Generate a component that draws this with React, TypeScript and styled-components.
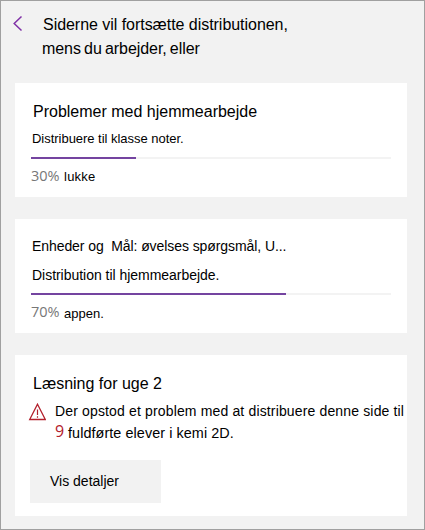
import styled, { createGlobalStyle } from "styled-components";

const GlobalStyle = createGlobalStyle`
  * {
    box-sizing: border-box;
  }
  body {
    margin: 0;
    background: #f2f2f2;
    font-family: "Liberation Sans", Arial, sans-serif;
    color: #000;
  }
`;

const Panel = styled.main`
  width: 425px;
  height: 530px;
  padding: 12px 17px 0 14px;
  border: 1px solid #a0a0a0;
  background: #f2f2f2;
  overflow: hidden;
`;

const Header = styled.header`
  display: flex;
  height: 70px;
`;

const BackButton = styled.button`
  width: 27px;
  height: 24px;
  padding: 0;
  border: 0;
  background: none;

  svg {
    display: block;
    overflow: visible;
  }
`;

const Heading = styled.h1`
  margin: 0;
  font-size: 16px;
  font-weight: 400;
`;

const Line = styled.span<{
  $size?: number;
  $height?: number;
  $spacing?: number;
  $wordSpacing?: number;
  $indent?: number;
}>`
  display: block;
  padding-left: ${({ $indent = 0 }) => $indent}px;
  font-size: ${({ $size = 14 }) => $size}px;
  line-height: ${({ $height = 24 }) => $height}px;
  letter-spacing: ${({ $spacing = 0 }) => $spacing}px;
  word-spacing: ${({ $wordSpacing = 0 }) => $wordSpacing}px;
  white-space: pre;
`;

const CardList = styled.div`
  display: flex;
  flex-direction: column;
  gap: 22px;
`;

const Card = styled.section<{ $height: number }>`
  height: ${({ $height }) => $height}px;
  padding: 17px 16px 0;
  background: #fff;
`;

const Track = styled.div<{ $top: number }>`
  height: 2px;
  margin-top: ${({ $top }) => $top}px;
  background: #f3f3f3;
`;

const Fill = styled.div`
  height: 2px;
  background: #7444a0;
`;

const Status = styled.div`
  display: flex;
  gap: 4px;
  margin-top: 6px;
`;

const Percent = styled.span`
  width: 29px;
  color: #777;
  font-family: "Open Sans", sans-serif;
  font-size: 14.5px;
  line-height: 22px;
  letter-spacing: -0.1px;
`;

const Alert = styled.div`
  display: flex;
  margin: 4px -16px 0 -3px;

  svg {
    flex: none;
    margin-top: 3px;
  }
`;

const AlertText = styled.div`
  padding-left: 9px;
`;

const AlertRow = styled.div`
  display: flex;
`;

const Count = styled.span`
  width: 12px;
  color: #b3202c;
  font-family: "Open Sans", sans-serif;
  font-size: 16px;
  line-height: 19px;
`;

const DetailsButton = styled.button`
  display: flex;
  width: 131px;
  height: 43px;
  margin: 16px 0 0 -1px;
  padding: 9px 0 0 20px;
  border: 0;
  background: #f2f2f2;
  color: #000;
  font-family: inherit;
  text-align: left;
`;

const BackIcon = () => (
  <svg width="12" height="24" viewBox="0 0 12 24" fill="none">
    <path d="M6.5 3.5 L-0.8 10.5 L6.5 17.5" stroke="#8031a7" strokeWidth="1.5" />
  </svg>
);

const WarningIcon = () => (
  <svg width="18" height="18" viewBox="0 0 18 18" fill="none" stroke="#b3202c">
    <path d="M9.5 1.2 L17.3 16.5 H1.7 Z" strokeWidth="1.3" />
    <path d="M9.5 6.5 V12 M9.5 13.3 V14.7" strokeWidth="1.2" />
  </svg>
);

const Progress = ({ value, top }: { value: number; top: number }) => (
  <Track $top={top}>
    <Fill style={{ width: `${value}%` }} />
  </Track>
);

export default function App() {
  return (
    <Panel>
      <GlobalStyle />
      <Header>
        <BackButton aria-label="Tilbage">
          <BackIcon />
        </BackButton>
        <Heading>
          <Line $size={16} $indent={1} $spacing={-0.04}>
            Siderne vil fortsætte distributionen,
          </Line>
          <Line $size={16} $spacing={-0.06} $wordSpacing={-1.2}>
            mens du arbejder, eller
          </Line>
        </Heading>
      </Header>
      <CardList>
        <Card $height={114}>
          <Line $size={16} $indent={2}>
            Problemer med hjemmearbejde
          </Line>
          <Line $size={13} $height={30} $indent={1} $spacing={-0.03}>
            Distribuere til klasse noter.
          </Line>
          <Progress value={29.2} top={3} />
          <Status>
            <Percent>30%</Percent>
            <Line $size={13} $height={23} $spacing={0.25}>lukke</Line>
          </Status>
        </Card>
        <Card $height={114}>
          <Line $size={14} $height={21} $indent={1} $spacing={-0.08}>
            {"Enheder og  Mål: øvelses spørgsmål, U..."}
          </Line>
          <Line $size={14} $height={36} $indent={1} $spacing={-0.03}>
            Distribution til hjemmearbejde.
          </Line>
          <Progress value={70.7} top={0} />
          <Status>
            <Percent>70%</Percent>
            <Line $size={13} $height={25}>appen.</Line>
          </Status>
        </Card>
        <Card $height={161}>
          <Line $size={16} $indent={2}>
            Læsning for uge 2
          </Line>
          <Alert>
            <WarningIcon />
            <AlertText>
              <Line $height={22} $spacing={0.15}>
                Der opstod et problem med at distribuere denne side til
              </Line>
              <AlertRow>
                <Count>9</Count>
                <Line $height={22} $size={14.4} $indent={1} $spacing={0.07}>
                  fuldførte elever i kemi 2D.
                </Line>
              </AlertRow>
            </AlertText>
          </Alert>
          <DetailsButton>
            <Line>Vis detaljer</Line>
          </DetailsButton>
        </Card>
      </CardList>
    </Panel>
  );
}
